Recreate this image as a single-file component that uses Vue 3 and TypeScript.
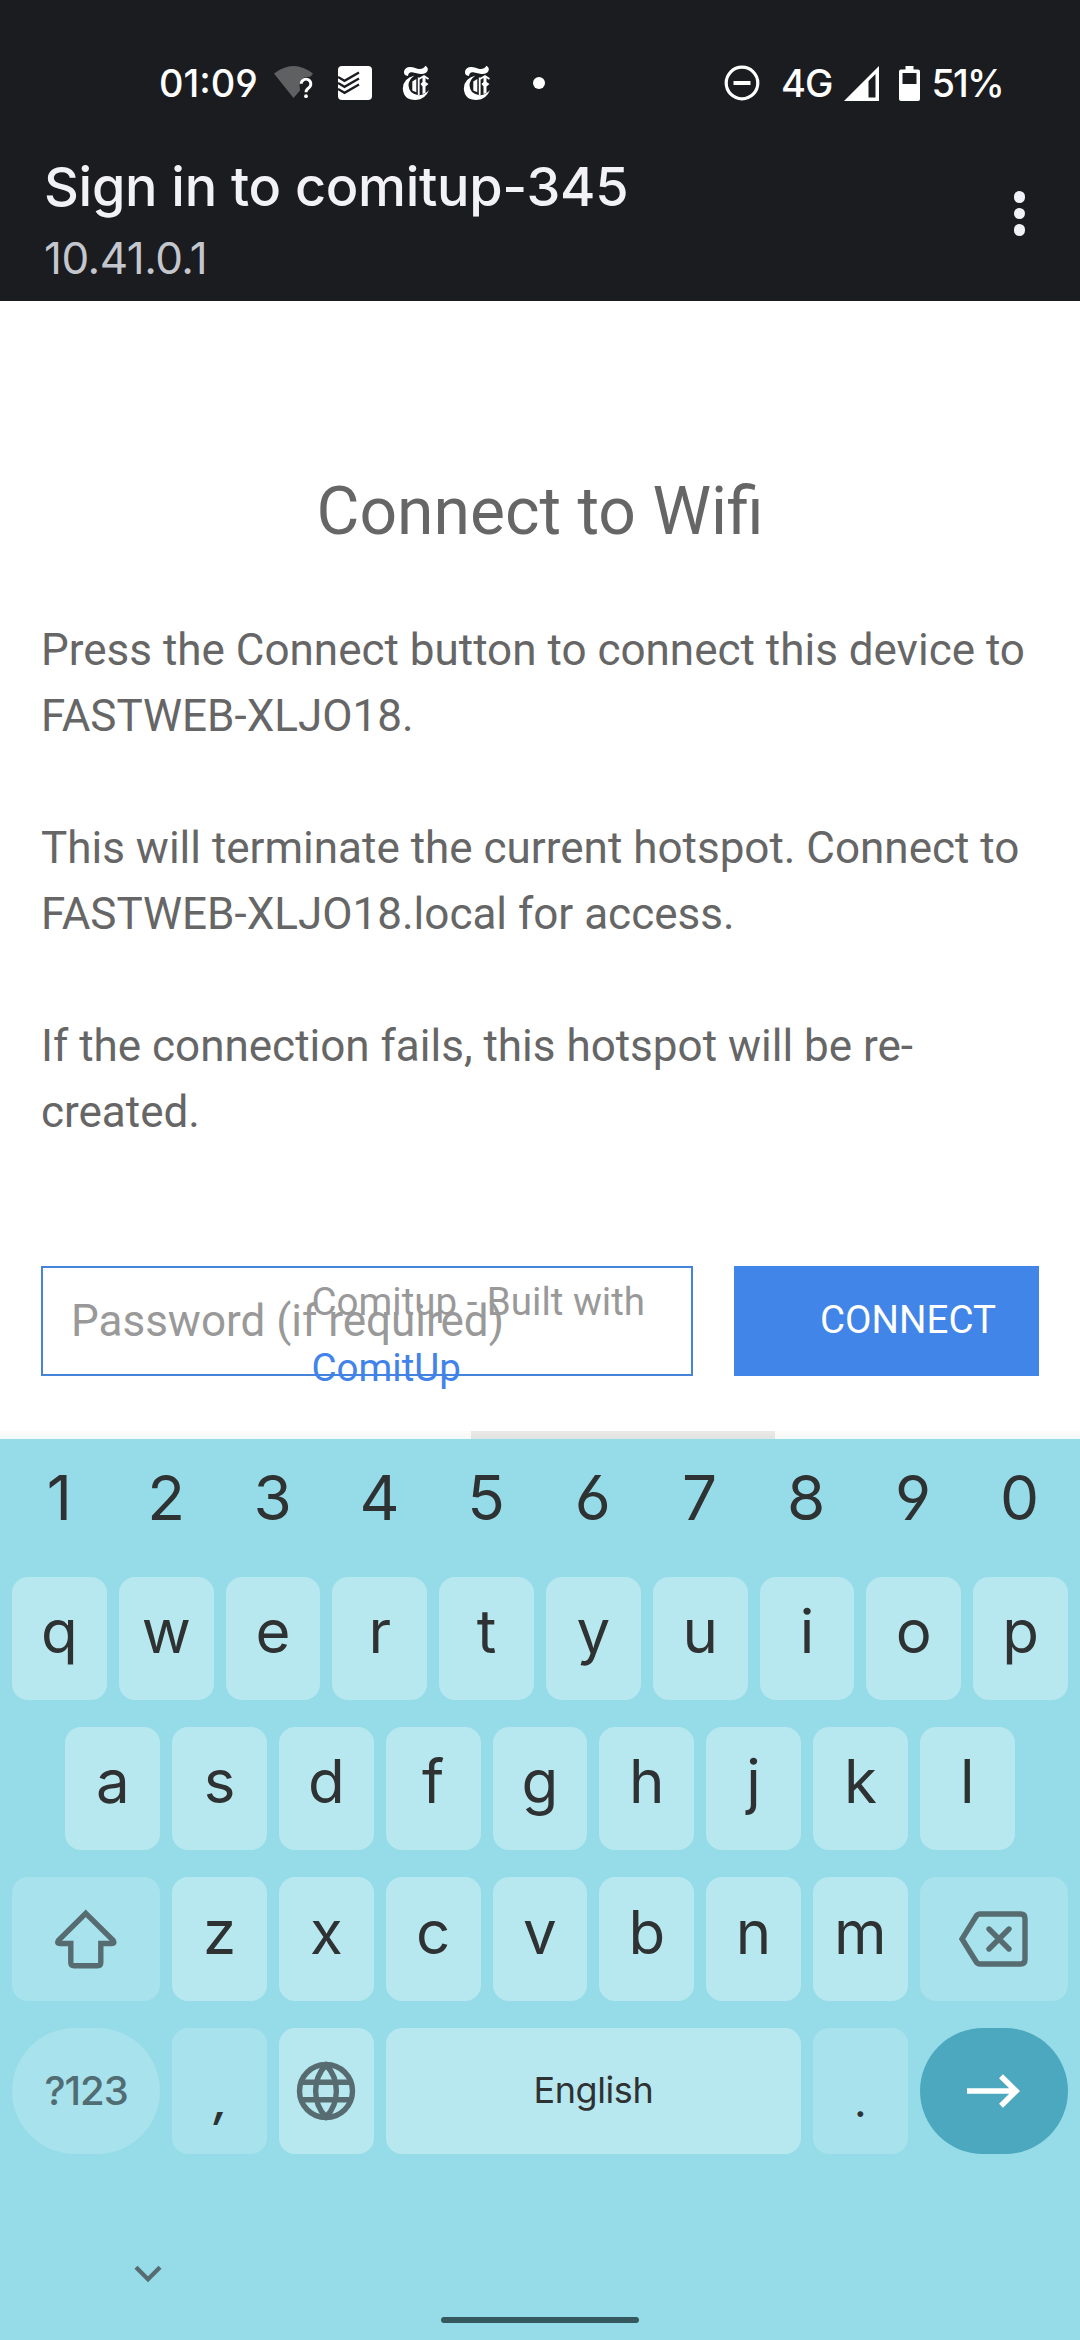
<script setup lang="ts">
interface Key {
  label: string
  kind?: string
  icon?: string
}

const digits: string[] = [...'1234567890']
const rows: Key[][] = [
  [...'qwertyuiop'].map((label) => ({ label })),
  [...'asdfghjkl'].map((label) => ({ label })),
  [
    { label: 'Shift', kind: 'wide soft', icon: 'shift' },
    ...[...'zxcvbnm'].map((label) => ({ label })),
    { label: 'Delete', kind: 'wide soft', icon: 'delete' },
  ],
  [
    { label: '?123', kind: 'wide soft pill symbols' },
    { label: ',', kind: 'soft punct comma' },
    { label: 'Language', icon: 'globe' },
    { label: 'English', kind: 'space' },
    { label: '.', kind: 'soft punct' },
    { label: 'Next', kind: 'wide pill enter', icon: 'next' },
  ],
]
</script>

<template>
  <div class="screen">
    <header class="top">
      <div class="status">
        <div class="status-left">
          <span class="clock">01:09</span>
          <svg class="wifi" width="40" height="34" viewBox="0 0 40 34">
            <path d="M0 7.500Q19.500-7.500 39 7.500L36.500 10.800Q26 10 25.500 19L26 24.500L19.500 32Z" fill="#5f6062" />
            <path d="M27.200 17.800a4.800 4.800 0 1 1 7.400 4.200q-2.600 1.700-2.600 4.200" fill="none" stroke="#fff" stroke-width="2.900" />
            <circle cx="32" cy="30.200" r="1.900" fill="#fff" />
          </svg>
          <svg class="tasks" width="34" height="34" viewBox="0 0 34 34">
            <rect width="34" height="34" rx="4" fill="#fff" />
            <path d="M0 11L6.500 14.800L21 6.500M0 17L6.500 20.800L21 12.500M0 23L6.500 26.800L21 18.500" fill="none" stroke="#1b1c1f" stroke-width="2.300" />
          </svg>
          <svg v-for="n in 2" :key="n" class="times" width="28" height="36" viewBox="0 0 28 36">
            <path d="M6 11Q1.500 10.500 2 6.500Q3 1.800 8.500 2Q11.500 2.200 15.500 3.700Q20.500 5.200 23.500 .8Q27 3.200 25.300 6.300Q23 10 17 8.800L10 7.300Q6.500 6.800 6 11Z" fill="#fff" />
            <path d="M12.500 10.500Q1 13.500 .8 23.500Q1.500 35 13.500 35Q23.500 34.500 27 25Q22 31 15.500 30Q7 28.500 6.500 20.500Q6.300 15 12.500 10.500Z" fill="#fff" />
            <path d="M10.300 16.500L14.300 14V27.200L10.300 25.500Z" fill="#fff" />
            <path d="M16.700 12.500V30M17 14L22 11L26.500 14" fill="none" stroke="#fff" stroke-width="1.800" />
            <path d="M20.500 12H23.500V17L26.500 19L23.500 21.500V28L20.500 29V21.500L18.500 19L20.500 17Z" fill="#fff" />
          </svg>
          <i class="more-dot"></i>
        </div>
        <div class="status-right">
          <svg class="dnd" width="36" height="36" viewBox="0 0 36 36">
            <circle cx="18" cy="18" r="15.800" fill="none" stroke="#fff" stroke-width="3.200" />
            <path d="M9.500 18H26.500" stroke="#fff" stroke-width="4" />
          </svg>
          <span class="net">4G</span>
          <svg class="signal" width="35" height="35" viewBox="0 0 35 35">
            <path fill-rule="evenodd" d="M0 35L35 0V35ZM24.500 15V31.500H31.500V8Z" fill="#fff" />
          </svg>
          <svg class="battery" width="21" height="35" viewBox="0 0 21 35">
            <path fill-rule="evenodd" d="M6.500 0H14.500V3.500H19Q21 3.500 21 5.500V33Q21 35 19 35H2Q0 35 0 33V5.500Q0 3.500 2 3.500H6.500ZM3.500 7V18H17.500V7Z" fill="#fff" />
          </svg>
          <span class="pct">51%</span>
        </div>
      </div>
      <div class="bar">
        <div class="titles">
          <h1 class="title">Sign in to comitup-345</h1>
          <p class="address">10.41.0.1</p>
        </div>
        <div class="menu"><i></i><i></i><i></i></div>
      </div>
    </header>

    <main class="page">
      <h2 class="heading">Connect to Wifi</h2>
      <p class="para">Press the Connect button to connect this device to FASTWEB-XLJO18.</p>
      <p class="para">This will terminate the current hotspot. Connect to FASTWEB-XLJO18.local for access.</p>
      <p class="para">If the connection fails, this hotspot will be re-created.</p>
      <form class="form">
        <input class="password" type="text" placeholder="Password (if required)" />
        <button class="connect" type="button">CONNECT</button>
      </form>
      <p class="credit">Comitup - Built with<br /><a>ComitUp</a></p>
      <div class="edge"><i></i></div>
    </main>

    <section class="keyboard">
      <div class="digits">
        <span v-for="d in digits" :key="d">{{ d }}</span>
      </div>
      <div v-for="(row, i) in rows" :key="i" class="row" :class="'row-' + (i + 1)">
        <div v-for="key in row" :key="key.label" class="key" :class="[key.kind, { 'has-icon': key.icon }]">
          <svg v-if="key.icon === 'shift'" width="62" height="60" viewBox="0 0 62 60">
            <path d="M30.800 4.300L57.800 31Q60.500 34.500 56.500 34.500H45.800V53.500Q45.800 56.700 42.600 56.700H19Q15.800 56.700 15.800 53.500V34.500H5.100Q1.100 34.500 3.800 31Z" class="line" />
          </svg>
          <svg v-else-if="key.icon === 'delete'" width="70" height="56" viewBox="0 0 70 56">
            <path d="M21 3H61.500Q66 3 66 7.500V48.500Q66 53 61.500 53H21Q18.500 53 17 50.500L3 28L17 5.500Q18.500 3 21 3Z" class="line" />
            <path d="M30 18L50 38M50 18L30 38" class="line round" />
          </svg>
          <svg v-else-if="key.icon === 'globe'" width="60" height="60" viewBox="0 0 60 60">
            <circle cx="30" cy="30" r="26.500" class="line" />
            <path d="M5 21.200H55M5 38.800H55M30 4C16.200 18 16.200 42 30 56C43.800 42 43.800 18 30 4Z" class="line" />
          </svg>
          <svg v-else-if="key.icon === 'next'" width="54" height="34" viewBox="0 0 54 34">
            <path d="M0 17H49M34 2.300L49 17L34 31.700" fill="none" stroke="#fff" stroke-width="5.600" />
          </svg>
          <span v-else>{{ key.label }}</span>
        </div>
      </div>
      <div class="nav">
        <svg width="28" height="18" viewBox="0 0 28 18">
          <path d="M2 2.300L14 14.300L26 2.300" fill="none" stroke="#566c70" stroke-width="4.300" />
        </svg>
        <i class="home"></i>
      </div>
    </section>
  </div>
</template>

<style>
body {
  margin: 0;
}
</style>

<style scoped>
.screen {
  width: 1080px;
  height: 2340px;
  display: flex;
  flex-direction: column;
  overflow: hidden;
  background: #fff;
  font-family: Roboto, sans-serif;
}
h1, h2, p {
  margin: 0;
  font-weight: 400;
}
.top {
  height: 301px;
  background: #1b1c1f;
  color: #fff;
  font-family: Inter, sans-serif;
  font-feature-settings: 'cv03', 'cv04';
}
.status {
  height: 166px;
  box-sizing: border-box;
  padding: 0 77px 0 159px;
  display: flex;
  align-items: center;
  justify-content: space-between;
  font-size: 38px;
  font-weight: 500;
}
.status-left,
.status-right {
  display: flex;
  align-items: center;
}
.wifi { margin-left: 16px; }
.tasks { margin-left: 24px; }
.times { margin-left: 30px; }
.times + .times { margin-left: 33px; }
.more-dot {
  width: 12px;
  height: 12px;
  margin-left: 42px;
  border-radius: 50%;
  background: #fff;
}
.net {
  margin-left: 21px;
  letter-spacing: -1px;
}
.signal { margin-left: 12px; }
.battery { margin-left: 20px; }
.pct {
  margin-left: 11px;
  letter-spacing: -1.800px;
}
.bar {
  display: flex;
  justify-content: space-between;
  padding: 0 55px 0 44px;
}
.title {
  color: #f1f1f6;
  font-size: 54px;
  font-weight: 500;
  letter-spacing: -0.300px;
  line-height: 66px;
  margin-top: -12px;
}
.address {
  color: #c4c6ce;
  font-size: 44px;
  letter-spacing: -0.500px;
  line-height: 60px;
  margin-top: 8px;
}
.menu {
  display: flex;
  flex-direction: column;
  gap: 5px;
  padding-top: 25px;
}
.menu i {
  width: 11.500px;
  height: 11.500px;
  border-radius: 50%;
  background: #f1f1f8;
}
.page {
  position: relative;
  height: 1138px;
  box-sizing: border-box;
  padding: 171px 41px 0;
  color: #666;
}
.heading {
  font-size: 66px;
  line-height: 80px;
  text-align: center;
  margin-bottom: 65px;
}
.para {
  font-size: 44px;
  line-height: 66px;
}
.para + .para {
  margin-top: 66px;
}
.form {
  display: flex;
  justify-content: space-between;
  margin-top: 121px;
}
.password {
  width: 652px;
  height: 110px;
  box-sizing: border-box;
  padding: 0 28px;
  border: 2px solid #4683db;
  border-radius: 0;
  background: #fff;
  font: 44px Roboto, sans-serif;
}
.password::placeholder {
  color: #999;
  opacity: 1;
}
.connect {
  width: 305px;
  height: 110px;
  box-sizing: border-box;
  padding: 0 42px 3px 85px;
  border: 0;
  background: #4285e8;
  color: #fff;
  font: 38.500px Roboto, sans-serif;
}
.credit {
  position: absolute;
  left: 311.500px;
  top: 968px;
  color: #999;
  font-size: 38.500px;
  line-height: 66px;
}
.credit a {
  color: #4183ea;
}
.edge {
  position: absolute;
  left: 0;
  right: 0;
  bottom: 0;
  height: 8px;
  background: linear-gradient(#fffaf7, #f0faf9);
}
.edge i {
  display: block;
  width: 304px;
  height: 8px;
  margin-left: 471px;
  background: linear-gradient(#ede8e5, #dde5e4);
}
.keyboard {
  flex: 1;
  display: flex;
  flex-direction: column;
  background: #96dce8;
  color: #2f3233;
  font-family: Inter, sans-serif;
  font-feature-settings: 'cv03', 'cv04';
}
.digits {
  display: flex;
  height: 138px;
  box-sizing: border-box;
  padding: 0 7px 22px 6px;
  align-items: center;
  font-size: 62px;
}
.digits span {
  flex: 1;
  text-align: center;
}
.row {
  display: flex;
  gap: 12px;
  padding: 0 12px;
  height: 123px;
  margin-bottom: 27px;
}
.row-2 { padding: 0 65.400px; }
.row-3 { height: 124px; }
.row-4 { height: 126px; margin-bottom: 0; }
.key {
  width: 94.800px;
  box-sizing: border-box;
  padding-bottom: 15px;
  display: flex;
  align-items: center;
  justify-content: center;
  border-radius: 16px;
  background: #b8e8ef;
  font-size: 60px;
}
.soft { background: #a8e2ec; }
.wide { width: 148.200px; }
.space {
  width: 415.200px;
  font-size: 36px;
  letter-spacing: -0.400px;
  padding-bottom: 2px;
}
.pill { border-radius: 63px; }
.symbols {
  color: #516c72;
  font-size: 40px;
  font-weight: 500;
  letter-spacing: -1px;
  padding-bottom: 2px;
}
.punct {
  font-size: 44px;
  padding: 20px 0 0;
}
.comma {
  padding-left: 3px;
  font-style: italic;
  font-weight: 600;
}
.enter { background: #4ca8be; }
.has-icon { padding-bottom: 0; }
.line {
  fill: none;
  stroke: #566c70;
  stroke-width: 5.400px;
}
.round { stroke-linecap: round; }
.nav {
  display: flex;
  flex-direction: column;
  padding: 111px 0 0 134px;
}
.home {
  width: 198px;
  height: 6px;
  margin: 34px 0 0 307px;
  border-radius: 3px;
  background: #35585f;
}
</style>
